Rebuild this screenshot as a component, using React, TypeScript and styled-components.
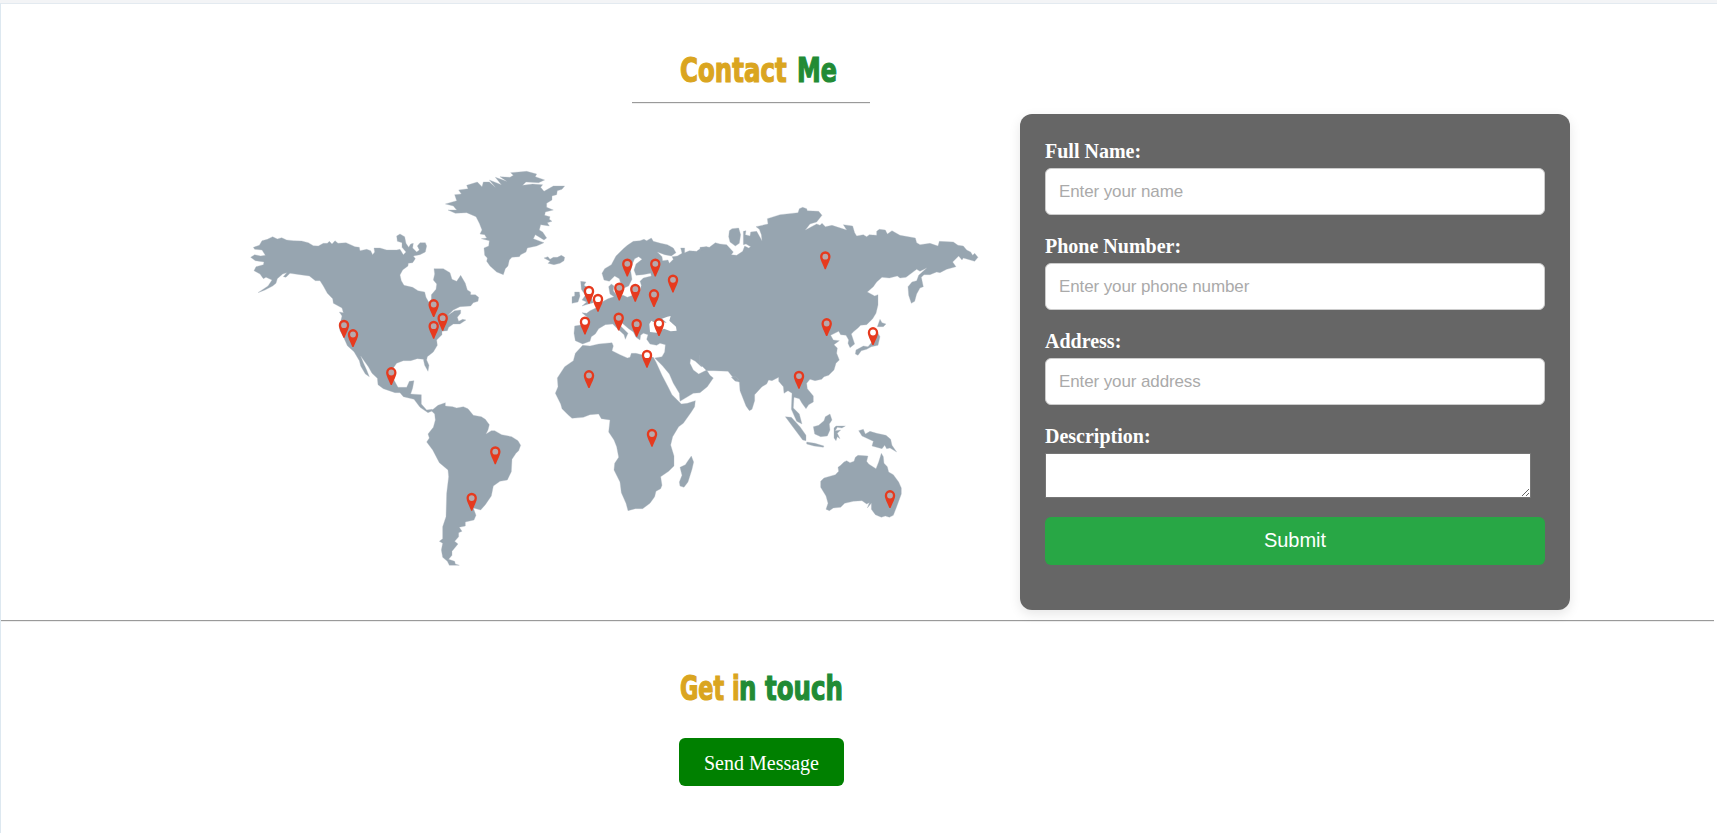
import React from "react";
import styled, { createGlobalStyle } from "styled-components";

const GlobalStyle = createGlobalStyle`
  * { box-sizing: border-box; }
  body { margin: 0; background: #fff; font-family: "Liberation Serif", serif; overflow: hidden; }
`;

const Page = styled.div`
  display: flex;
  flex-direction: column;
  height: 833px;
  border-top: 3px solid #f3f4f6;
`;
const Frame = styled.main`
  flex: 1;
  border-top: 1px solid #e3eaf0;
  border-left: 1px solid #dde8f0;
`;
const TitleBlock = styled.header`
  height: 110px;
  padding: 45px 0 0 631px;
`;
const Title = styled.h1`
  display: flex;
  height: 42px;
  margin: 0 0 0 48px;
  font: bold 34px/42px "DejaVu Sans Condensed", "DejaVu Sans", sans-serif;
  font-stretch: condensed;
  white-space: pre;
`;
const Word = styled.span<{ $color: string; $width: number; $squeeze: number }>`
  display: block;
  width: ${(p) => p.$width}px;
  color: ${(p) => p.$color};
  -webkit-text-stroke: 1.2px ${(p) => p.$color};
  transform: scaleX(${(p) => p.$squeeze});
  transform-origin: 0 50%;
`;
const Rule = styled.hr<{ $width: number }>`
  width: ${(p) => p.$width}px;
  height: 2px;
  margin: 0;
  border: 0;
  border-top: 1px solid #9a9a9a;
  border-bottom: 1px solid #eee;
`;
const TitleRule = styled(Rule)`
  margin-top: 11px;
`;
const ContactRow = styled.section`
  display: flex;
  gap: 40px;
  height: 506px;
  padding-left: 239px;
`;
const MapDrawing = styled.svg`
  display: block;
  width: 740px;
  height: 420px;
  margin-top: 46px;
`;
const Form = styled.form`
  width: 550px;
  height: 496px;
  padding: 25px;
  border-radius: 12px;
  background: #666;
  box-shadow: 0 4px 12px rgba(0, 0, 0, 0.1);
`;
const Label = styled.label`
  display: block;
  height: 29px;
  padding-top: 1px;
  color: #fff;
  font-weight: bold;
  font-size: 20px;
  line-height: 23px;
`;
const Input = styled.input`
  display: block;
  width: 500px;
  height: 47px;
  margin: 0 0 19px;
  padding: 0 13px;
  border: 1px solid #ccc;
  border-radius: 6px;
  background: #fff;
  font: 17px "Liberation Sans", sans-serif;
  letter-spacing: -0.11px;
  &::placeholder { color: #aaa; opacity: 1; }
`;
const TextArea = styled.textarea`
  display: block;
  width: 486px;
  height: 45px;
  margin: 0 0 19px;
  border: 1px solid #767676;
  background: #fff;
  resize: both;
`;
const SubmitButton = styled.button`
  display: block;
  width: 500px;
  height: 48px;
  padding: 0 0 2px;
  border: 0;
  border-radius: 6px;
  background: #28a745;
  color: #fff;
  font: 20px "Liberation Sans", sans-serif;
`;
const Touch = styled.section`
  padding: 45px 0 0 678px;
  & > h1 { margin-left: 1px; }
`;
const MessageButton = styled.a`
  display: flex;
  align-items: center;
  justify-content: center;
  width: 165px;
  height: 48px;
  margin-top: 29px;
  padding-top: 3px;
  border-radius: 6px;
  background: #008000;
  color: #fff;
  font-size: 20px;
`;

type Region = { x: number; y: number; land: string[]; water?: string[] };

// Each region is drawn at three units per pixel from its own corner.
const regions: Region[] = [
  {
    x: 240, y: 160,
    land: [
      "M40,262 L58,256 66,242 82,238 98,230 112,237 125,233 140,240 160,242 185,243 205,248 220,257 235,258 250,250 262,250 268,244 276,252 285,242 294,250 318,248 345,260 358,262 360,272 380,268 392,272 398,284 404,276 402,264 420,264 440,270 470,270 480,268 490,284 498,276 486,262 486,248 472,244 470,228 480,222 494,230 498,250 506,262 512,252 520,250 518,264 530,276 538,270 532,258 540,248 556,248 560,258 556,276 540,284 520,288 526,296 518,308 505,310 504,318 488,330 480,345 484,362 492,376 518,382 534,392 554,396 558,412 566,426 574,418 574,404 588,388 590,372 580,360 584,342 582,326 610,326 630,338 636,358 650,364 662,346 676,370 682,390 692,396 692,404 706,404 716,412 714,424 700,428 692,438 660,440 640,450 624,466 644,452 662,450 662,460 652,472 656,484 668,478 678,480 660,492 640,492 626,502 622,512 606,514 606,524 596,534 590,540 592,556 580,576 562,590 560,600 567,616 564,634 554,616 550,598 532,596 512,602 490,602 470,610 460,624 460,656 474,682 500,682 508,664 522,662 518,684 512,702 544,704 544,732 560,750 576,748 590,760 578,752 564,758 540,742 522,718 490,710 480,698 465,698 430,686 414,674 412,655 396,640 385,620 362,588 370,608 380,630 388,650 376,642 362,618 358,602 342,575 322,557 310,530 300,512 298,500 302,484 306,468 298,456 310,458 306,444 280,430 278,416 262,400 250,378 240,362 226,362 208,348 180,344 150,340 138,352 130,350 140,338 128,342 112,356 108,370 98,378 75,390 54,398 84,378 96,360 78,352 70,356 60,342 42,332 48,320 70,314 72,306 46,302 32,292 44,284 62,288 76,286 66,270 44,268Z",
    ],
  },
  {
    x: 420, y: 160,
    land: [
      "M76,132 L110,122 104,104 124,102 116,90 144,86 140,76 172,66 186,80 190,66 208,66 226,82 208,60 244,74 226,52 260,64 240,50 270,52 280,46 272,38 320,34 350,42 346,50 374,60 356,68 318,66 308,76 338,72 368,74 362,82 372,94 400,78 434,78 426,88 412,92 410,104 396,108 396,120 380,130 380,142 400,150 376,156 374,166 390,170 388,178 396,184 382,188 388,198 362,194 358,210 368,216 380,234 372,240 346,224 340,236 372,248 350,258 322,264 318,276 302,284 298,290 276,292 268,300 264,318 256,326 250,344 230,336 210,318 200,304 202,294 194,286 192,264 206,258 208,242 184,236 200,234 194,224 180,222 186,210 178,190 168,170 140,158 106,160 84,150 110,150 100,138Z",
      "M372,294 L384,290 390,298 400,292 412,292 424,286 434,292 432,302 420,310 402,314 384,310 390,304Z",
    ],
  },
  {
    x: 540, y: 220,
    land: [
      "M104,318 L122,315 146,320 148,300 140,290 126,278 140,280 150,272 172,262 190,244 204,236 222,230 210,222 206,200 214,192 222,198 220,212 230,226 250,226 262,232 282,224 298,218 304,196 300,184 310,174 334,168 332,160 308,164 288,166 282,150 288,132 306,118 296,110 284,116 278,130 272,152 276,178 266,198 252,204 242,190 238,176 224,168 208,184 192,180 186,160 194,146 214,134 228,108 250,86 262,76 280,64 300,62 312,58 320,62 334,54 340,64 362,70 382,74 400,84 408,98 394,108 374,104 352,96 366,110 368,122 384,120 388,130 400,118 396,110 412,108 426,100 422,84 434,84 434,98 448,92 470,94 486,82 500,80 500,432 484,440 466,424 452,416 450,430 460,450 476,462 500,450 510,466 520,474 502,500 480,518 460,520 420,544 418,520 400,490 388,462 368,438 344,414 366,410 374,396 376,374 360,370 350,376 330,372 320,358 324,344 310,340 302,346 300,360 288,352 280,336 266,326 240,304 244,320 264,340 256,358 252,344 230,324 218,312 196,314 176,326 166,342 154,350 150,364 128,372 106,362 102,340Z",
      "M122,184 L138,186 132,196 142,202 144,220 156,236 160,248 146,252 126,258 140,246 126,240 136,226 124,208Z",
      "M96,230 L104,228 104,216 118,216 120,228 114,246 96,250Z",
      "M228,208 L240,212 236,224 228,220Z",
    ],
    water: ["M328,312 L334,302 354,314 360,306 380,308 366,296 382,290 392,288 388,302 408,320 410,332 392,334 372,326 350,338 330,336Z"],
  },
  {
    x: 540, y: 330,
    land: [
      "M106,70 L128,46 150,48 176,42 216,38 220,48 216,62 240,74 262,84 270,82 274,70 288,70 320,78 340,82 348,96 366,136 384,170 396,194 412,210 424,222 442,220 466,212 464,230 454,246 430,280 416,290 398,320 392,345 402,378 402,408 386,424 362,440 366,466 362,476 348,484 344,500 330,520 308,536 286,536 264,542 258,520 244,488 240,456 222,420 224,400 236,382 230,350 222,330 206,306 210,270 184,266 176,252 150,254 130,262 96,265 84,254 66,236 62,222 46,190 54,170 52,144 74,110 100,92Z",
      "M454,378 L461,396 456,418 444,456 432,472 420,468 418,456 426,436 420,412 436,404 444,392Z",
    ],
  },
  {
    x: 700, y: 190,
    land: [
      "M0,172 L20,170 28,172 46,158 60,162 80,164 100,186 94,194 110,196 128,184 134,168 146,174 152,170 138,162 130,164 130,124 138,122 136,134 150,138 152,126 170,124 186,152 184,134 178,118 168,110 204,102 202,86 240,74 294,68 298,56 308,52 320,56 322,62 356,64 366,76 350,96 330,102 316,120 350,102 360,106 366,100 376,110 396,106 440,120 430,104 458,108 464,128 470,138 490,134 500,140 508,134 530,136 530,124 538,118 556,120 562,132 576,122 600,136 646,144 650,158 660,164 690,160 714,168 718,154 760,156 774,166 790,168 800,180 812,186 818,196 824,190 834,202 824,214 790,204 786,210 776,198 758,216 768,230 740,238 720,248 710,246 690,254 672,254 664,262 670,290 660,294 650,312 644,334 634,340 626,316 624,290 636,276 650,272 656,256 680,234 660,244 650,238 618,262 600,264 592,258 568,264 546,262 530,276 520,290 502,306 524,318 534,314 534,345 528,370 518,386 500,404 482,406 474,414 462,424 454,432 464,462 450,473 444,460 446,450 438,436 422,434 416,424 392,436 400,450 418,452 402,464 412,474 410,490 418,510 408,520 402,540 386,556 372,560 365,568 345,572 330,568 320,580 322,596 340,618 340,636 326,644 318,656 306,640 298,626 282,622 280,654 298,672 306,702 290,694 274,658 276,610 264,602 252,610 250,590 236,574 236,562 216,572 206,570 200,582 186,590 164,614 164,632 156,658 148,662 138,648 120,602 118,576 108,574 84,544 40,542 20,542 0,522Z",
      "M86,140 L88,122 96,116 116,114 122,134 118,160 106,168 90,156Z",
      "M94,562 L106,560 116,568 106,574Z",
      "M540,388 L546,398 558,402 550,410 532,410Z",
      "M530,422 L540,440 534,466 514,470 500,478 484,482 474,496 466,492 468,480 490,468 504,470 516,456 528,444Z",
      "M256,680 L274,682 300,710 318,736 318,752 308,750 290,726Z",
      "M320,756 L345,760 372,768 370,772 342,768 320,762Z",
      "M340,710 L356,706 372,692 376,680 390,672 396,690 388,702 390,720 382,738 362,740 344,732Z",
      "M402,714 L408,708 436,708 426,714 412,712 406,722 422,720 412,730 420,746 412,740 408,752 402,744Z",
    ],
  },
  {
    x: 410, y: 390,
    land: [
      "M64,62 L84,46 106,38 106,48 128,50 140,54 160,50 174,56 190,76 214,80 226,88 238,104 234,120 228,132 244,122 254,122 275,134 305,140 324,152 332,166 326,182 318,190 306,208 304,245 292,270 270,274 250,288 244,318 226,344 212,360 190,354 198,376 192,390 166,396 166,408 148,412 156,424 146,428 146,440 134,454 144,462 126,484 126,496 116,508 134,514 136,522 148,526 118,526 112,514 98,502 94,480 98,460 88,454 98,446 98,410 108,380 110,310 116,260 114,240 88,218 68,180 50,156 58,144 54,132 70,112 76,90 74,72Z",
    ],
  },
  {
    x: 770, y: 390,
    land: [
      "M152,274 L162,264 196,254 206,244 204,232 212,226 222,216 230,212 240,218 252,214 256,202 264,196 294,198 290,214 296,222 318,236 326,216 334,190 340,200 342,220 352,230 356,246 370,254 386,276 394,294 394,312 380,350 370,376 358,382 346,378 334,382 316,374 304,358 304,340 292,354 298,338 290,342 276,332 250,334 224,340 212,352 190,354 178,362 168,358 174,340 168,318 152,292Z",
      "M266,122 L280,118 286,132 300,124 320,130 348,136 362,148 366,166 380,186 360,174 350,176 344,166 336,176 306,168 310,154 276,138Z",
    ],
  },
];

const pins: { x: number; y: number; open?: boolean }[] = [
  { x: 344, y: 324.7 }, { x: 353, y: 334 }, { x: 391.3, y: 372 }, { x: 433.7, y: 304 },
  { x: 442.7, y: 317.7 }, { x: 433.7, y: 325.7 }, { x: 627.3, y: 263.3 }, { x: 655.3, y: 263.3 },
  { x: 673, y: 279.3 }, { x: 589, y: 290.7, open: true }, { x: 598, y: 298.7, open: true },
  { x: 619.3, y: 287.3 }, { x: 635.3, y: 288.7 }, { x: 654, y: 294 }, { x: 585, y: 321.3, open: true },
  { x: 618.7, y: 317.3 }, { x: 636.7, y: 323.7 }, { x: 659, y: 323, open: true },
  { x: 647, y: 354.7, open: true }, { x: 589, y: 375 }, { x: 652, y: 433.6 },
  { x: 825.3, y: 256.2 }, { x: 826.7, y: 323 }, { x: 873, y: 332, open: true },
  { x: 799, y: 375.6 }, { x: 495.3, y: 451.2 }, { x: 471.7, y: 497.6 }, { x: 890, y: 495 },
];

const WorldMap = () => (
  <MapDrawing viewBox="240 160 740 420" role="img" aria-label="World map">
    {regions.map((r, i) => (
      <g key={i} transform={`translate(${r.x} ${r.y}) scale(.33333)`} strokeLinejoin="round">
        {r.land.map((d, k) => <path key={k} d={d} fill="#97a5b0" stroke="#b3bdc5" strokeWidth="1" />)}
        {r.water?.map((d, k) => <path key={k} d={d} fill="#fff" />)}
      </g>
    ))}
    <path d="M697 251L710 249V366H702L700 363.5V355H697Z" fill="#97a5b0" />
    {pins.map((p, i) => (
      <g key={i} transform={`translate(${p.x} ${p.y + 0.7})`}>
        <circle r="3.5" fill={p.open ? "#fff" : "#b7a9ac"} />
        <path
          fillRule="evenodd"
          fill="#e63a1e"
          d="M0-5.6A5.2 5.3 0 0 0-5.2-.3C-5.2 3.4-2.2 7.5-.6 12.4H.6C2.2 7.5 5.2 3.4 5.2-.3A5.2 5.3 0 0 0 0-5.6M0-3.1A2.9 2.9 0 1 1 0 2.7A2.9 2.9 0 0 1 0-3.1Z"
        />
      </g>
    ))}
  </MapDrawing>
);

const fields = [
  { id: "name", label: "Full Name:", hint: "Enter your name" },
  { id: "phone", label: "Phone Number:", hint: "Enter your phone number" },
  { id: "address", label: "Address:", hint: "Enter your address" },
];

export default function App() {
  return (
    <Page>
      <GlobalStyle />
      <Frame>
        <TitleBlock>
          <Title>
            <Word $color="#daa520" $width={117} $squeeze={0.8}>Contact</Word>
            <Word $color="#228b35" $width={41} $squeeze={0.78}>Me</Word>
          </Title>
          <TitleRule $width={238} />
        </TitleBlock>
        <ContactRow>
          <WorldMap />
          <Form onSubmit={(e) => e.preventDefault()}>
            {fields.map((f) => (
              <React.Fragment key={f.id}>
                <Label htmlFor={f.id}>{f.label}</Label>
                <Input id={f.id} placeholder={f.hint} />
              </React.Fragment>
            ))}
            <Label htmlFor="description">Description:</Label>
            <TextArea id="description" />
            <SubmitButton>Submit</SubmitButton>
          </Form>
        </ContactRow>
        <Rule $width={1713} />
        <Touch>
          <Title>
            <Word $color="#daa520" $width={59} $squeeze={0.73}>Get i</Word>
            <Word $color="#228b35" $width={105} $squeeze={0.8}>n touch</Word>
          </Title>
          <MessageButton>Send Message</MessageButton>
        </Touch>
      </Frame>
    </Page>
  );
}
